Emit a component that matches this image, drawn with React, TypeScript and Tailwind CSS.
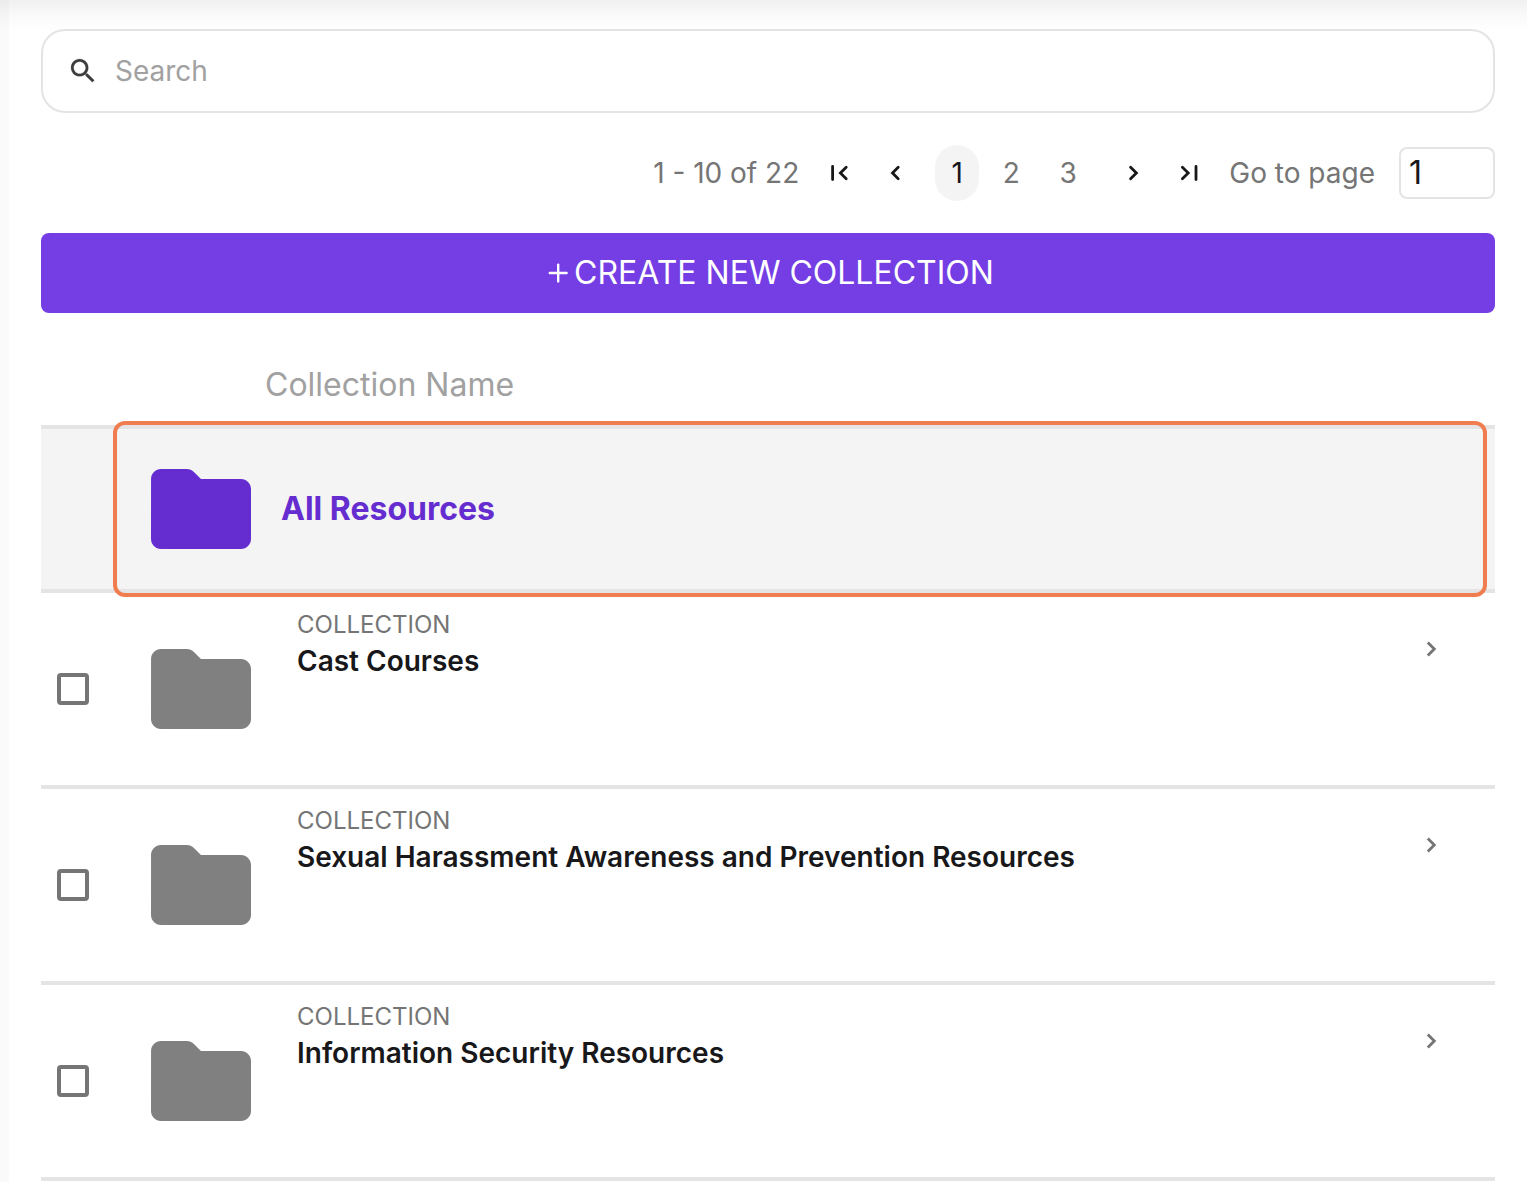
type Collection = { name: string };

const collections: Collection[] = [
  { name: "Cast Courses" },
  { name: "Sexual Harassment Awareness and Prevention Resources" },
  { name: "Information Security Resources" },
];

function FolderIcon({ className }: { className: string }) {
  return (
    <svg viewBox="0 0 24 24" className={`size-[120px] shrink-0 ${className}`} fill="currentColor">
      <path d="M10.59 4.59C10.21 4.21 9.7 4 9.17 4H4c-1.1 0-1.99.9-1.99 2L2 18c0 1.1.9 2 2 2h16c1.1 0 2-.9 2-2V8c0-1.1-.9-2-2-2h-8l-1.41-1.41z" />
    </svg>
  );
}

function PagerIcon({ d, label }: { d: string; label: string }) {
  return (
    <button aria-label={label} className="flex h-14 w-14 shrink-0 items-center justify-center text-[#18181a]">
      <svg viewBox="0 0 24 24" className="size-6" fill="none" stroke="currentColor" strokeWidth="2.8" strokeLinecap="round" strokeLinejoin="miter">
        <path d={d} />
      </svg>
    </button>
  );
}

function SearchBar() {
  return (
    <div className="flex h-[84px] items-center rounded-3xl border-2 border-[#e4e4e4] bg-white pl-6">
      <svg viewBox="0 0 24 24" className="size-8 shrink-0 text-[#3c3c3c]" fill="currentColor" stroke="currentColor" strokeWidth="0.15">
        <path d="M15.5 14h-.79l-.28-.27C15.41 12.59 16 11.11 16 9.5 16 5.91 13.09 3 9.5 3S3 5.91 3 9.5 5.91 16 9.5 16c1.61 0 3.09-.59 4.23-1.57l.27.28v.79l5 4.99L20.49 19l-4.99-5zm-6 0C7.01 14 5 11.99 5 9.5S7.01 5 9.5 5 14 7.01 14 9.5 11.99 14 9.5 14z" />
      </svg>
      <span className="ml-4 text-[28px] leading-8 text-[#a1a1a1]">Search</span>
    </div>
  );
}

function Pagination() {
  return (
    <nav className="mt-8 flex h-14 items-center justify-end text-[28px] leading-8 text-[#757575]">
      <span className="mr-3">1 - 10 of 22</span>
      <PagerIcon label="First page" d="M5.6 5.4V18.6M19.2 6.3L13.4 12L19.2 17.7" />
      <PagerIcon label="Previous page" d="M15.2 6.3L9.5 12L15.2 17.7" />
      <span className="ml-3 flex h-14 w-11 items-center justify-center rounded-[22px] bg-[#f4f4f4] text-[#18181a]">1</span>
      <span className="ml-2.5 w-11 text-center">2</span>
      <span className="ml-[13px] w-11 text-center">3</span>
      <span className="w-[15px]" />
      <PagerIcon label="Next page" d="M9.6 6.3L15.4 12L9.6 17.7" />
      <PagerIcon label="Last page" d="M5.4 6.3L11.2 12L5.4 17.7M19 5.4V18.6" />
      <span className="ml-3">Go to page</span>
      <span className="ml-6 flex h-[52px] w-24 items-center rounded-lg border-2 border-[#e4e4e4] pl-2 text-[32px] text-[#18181a]">1</span>
    </nav>
  );
}

function CollectionRow({ name }: Collection) {
  return (
    <div className="flex h-[196px] border-b-4 border-[#e4e4e4]">
      <div className="flex items-center pl-4">
        <span className="size-8 rounded-[4px] border-4 border-[#757575]" />
        <FolderIcon className="ml-[52px] text-[#808080]" />
      </div>
      <div className="ml-9 flex-1 pt-4">
        <div className="text-[24px] leading-8 text-[#757575]">COLLECTION</div>
        <div className="text-[28px] leading-10 font-semibold text-[#18181a]">{name}</div>
      </div>
      <svg viewBox="0 0 24 24" className="mt-11 mr-[52px] size-6 text-[#757575]" fill="none" stroke="currentColor" strokeWidth="2.8">
        <path d="M8.8 5.5L15.3 12L8.8 18.5" />
      </svg>
    </div>
  );
}

export default function App() {
  return (
    <div className="relative flex h-[1182px] w-full overflow-hidden bg-white font-['Inter',sans-serif]">
      <aside className="w-[9px] shrink-0 bg-[#fafafa]" />
      <div className="pointer-events-none absolute inset-x-0 top-0 h-8 bg-linear-to-b from-black/6 via-black/2 to-transparent" />
      <main className="flex-1 pt-[29px] pr-8 pl-8">
        <SearchBar />
        <Pagination />
        <button className="mt-8 flex h-20 w-full items-center justify-center rounded-lg bg-[#743ee4] pl-1 text-[32px] text-white">
          <svg viewBox="0 0 24 24" className="mr-1 size-6" stroke="currentColor" strokeWidth="2.4" strokeLinecap="round">
            <path d="M3.8 12H20.6M12.2 3.6V20.4" />
          </svg>
          CREATE NEW COLLECTION
        </button>
        <div className="flex h-28 items-center pt-8 pl-56 text-[32px] text-[#a1a1a1]">Collection Name</div>
        <div className="relative flex h-[168px] items-center border-y-4 border-[#e4e4e4] bg-[#f4f4f4] pl-[100px]">
          <FolderIcon className="text-[#652dd0]" />
          <span className="ml-5 text-[32px] font-bold text-[#652dd0]">All Resources</span>
          <div className="absolute -top-2 right-2 -bottom-2 left-[72px] rounded-xl border-4 border-[#ef7d50]" />
        </div>
        {collections.map((c) => (
          <CollectionRow key={c.name} name={c.name} />
        ))}
      </main>
    </div>
  );
}
